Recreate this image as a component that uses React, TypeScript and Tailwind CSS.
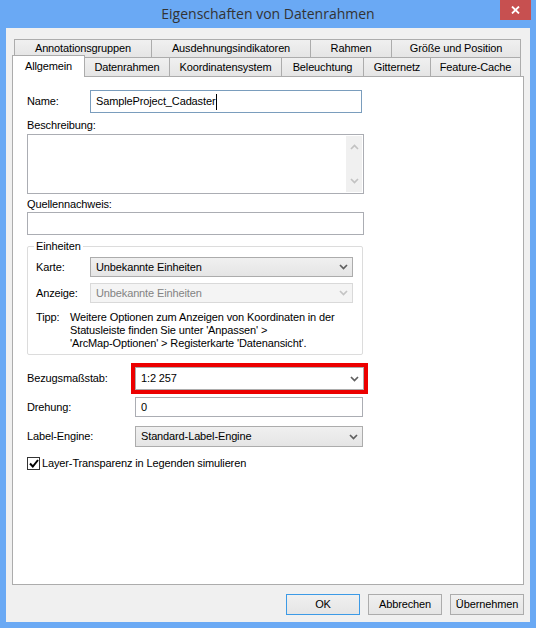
import React from "react";

const font = "font-['Liberation_Sans',Arial,sans-serif]";

function Chevron({ disabled = false }: { disabled?: boolean }) {
  return (
    <svg width="9" height="6" viewBox="0 0 9 6" className="shrink-0">
      <polyline
        points="1,1 4.5,4.5 8,1"
        fill="none"
        stroke={disabled ? "#c4c4c4" : "#5f5f5f"}
        strokeWidth="1.7"
      />
    </svg>
  );
}

function Tab({
  label,
  w,
  first = false,
}: {
  label: string;
  w: string;
  first?: boolean;
}) {
  return (
    <div
      className={`${w} ${first ? "" : "-ml-px"} h-full flex items-center justify-center border-t border-l border-r border-[#acacac] bg-gradient-to-b from-[#f0f0f0] to-[#e5e5e5] whitespace-nowrap`}
    >
      {label}
    </div>
  );
}

function Select({
  value,
  w,
  h = "h-[21px]",
  disabled = false,
}: {
  value: string;
  w: string;
  h?: string;
  disabled?: boolean;
}) {
  return (
    <div
      className={`${w} ${h} flex items-center justify-between pl-[5px] pr-[4px] border ${
        disabled
          ? "border-[#d9d9d9] bg-[#f4f4f4] text-[#838383]"
          : "border-[#acacac] bg-gradient-to-b from-[#f0f0f0] to-[#e5e5e5]"
      }`}
    >
      <span>{value}</span>
      <Chevron disabled={disabled} />
    </div>
  );
}

export default function App() {
  return (
    <div
      className={`w-[536px] h-[628px] bg-[#6aa9f4] flex flex-col ${font} text-[11px] leading-[13px] tracking-[-0.13px] text-black`}
    >
      {/* title bar */}
      <div className="h-[28px] grid grid-cols-[1fr_auto_1fr]">
        <div />
        <div className="pt-[4px] font-['Open_Sans',sans-serif] text-[14px] leading-[20px] tracking-normal text-[#333]">
          Eigenschaften von Datenrahmen
        </div>
        <div className="flex justify-end pr-[5px]">
          <div className="w-[31px] h-[20px] bg-[#c75050] flex items-center justify-center">
            <svg width="9" height="8" viewBox="0 0 9 8">
              <path d="M1 0.5 L8 7.5 M8 0.5 L1 7.5" stroke="#fff" strokeWidth="1.8" />
            </svg>
          </div>
        </div>
      </div>

      {/* client area */}
      <div className="mx-[6px] h-[594px] bg-[#f0f0f0] flex flex-col px-[6px] pt-[11px]">
        {/* tab rows */}
        <div className="h-[18px] flex pl-[2px]">
          <Tab first label="Annotationsgruppen" w="w-[138px]" />
          <Tab label="Ausdehnungsindikatoren" w="w-[160px]" />
          <Tab label="Rahmen" w="w-[82px]" />
          <Tab label="Größe und Position" w="w-[130px]" />
        </div>
        <div className="h-[19px] flex items-start">
          <div className="relative z-10 w-[73px] h-[22px] -mt-[2px] flex items-start justify-center pt-[4px] border-t border-l border-r border-[#acacac] bg-white">
            Allgemein
          </div>
          <div className="h-[19px] flex">
            <Tab label="Datenrahmen" w="w-[86px]" />
            <Tab label="Koordinatensystem" w="w-[113px]" />
            <Tab label="Beleuchtung" w="w-[83px]" />
            <Tab label="Gitternetz" w="w-[68px]" />
            <Tab label="Feature-Cache" w="w-[91px]" />
          </div>
        </div>

        {/* tab page */}
        <div className="h-[509px] border border-[#acacac] bg-white flex flex-col pl-[14px]">
          {/* Name */}
          <div className="mt-[13px] flex items-center">
            <span className="w-[63px]">Name:</span>
            <div className="w-[272px] h-[23px] border border-[#7a9dbd] flex items-center pl-[5px]">
              <span>SampleProject_Cadaster</span>
              <span className="w-px h-[16px] bg-black ml-[1px]" />
            </div>
          </div>

          <div className="mt-[6px]">Beschreibung:</div>
          <div className="mt-[2px] w-[337px] h-[60px] border border-[#abadb3] flex justify-end p-[1px]">
            <div className="w-[16px] h-full bg-[#f0f0f0] flex flex-col items-center justify-between py-[8px]">
              <svg width="9" height="6" viewBox="0 0 9 6">
                <polyline points="1,5 4.5,1.5 8,5" fill="none" stroke="#c2c2c2" strokeWidth="1.7" />
              </svg>
              <svg width="9" height="6" viewBox="0 0 9 6">
                <polyline points="1,1 4.5,4.5 8,1" fill="none" stroke="#c2c2c2" strokeWidth="1.7" />
              </svg>
            </div>
          </div>

          <div className="mt-[4px]">Quellennachweis:</div>
          <div className="mt-[1px] w-[337px] h-[23px] border border-[#abadb3]" />

          {/* Einheiten group */}
          <div className="mt-[11px] w-[336px] h-[109px] border border-[#dcdcdc] rounded-[2px] flex flex-col pl-[8px] pr-[9px]">
            <div className="-mt-[7px] -ml-[2px] self-start bg-white px-[2px]">Einheiten</div>
            <div className="mt-[4px] flex items-center">
              <span className="w-[54px]">Karte:</span>
              <Select value="Unbekannte Einheiten" w="w-[263px]" h="h-[20px]" />
            </div>
            <div className="mt-[6px] flex items-center">
              <span className="w-[54px]">Anzeige:</span>
              <Select value="Unbekannte Einheiten" w="w-[263px]" h="h-[20px]" disabled />
            </div>
            <div className="mt-[8px] flex">
              <span className="w-[34px]">Tipp:</span>
              <div className="flex flex-col">
                <span>Weitere Optionen zum Anzeigen von Koordinaten in der</span>
                <span>Statusleiste finden Sie unter 'Anpassen' &gt;</span>
                <span>'ArcMap-Optionen' &gt; Registerkarte 'Datenansicht'.</span>
              </div>
            </div>
          </div>

          {/* Bezugsmaßstab */}
          <div className="mt-[8px] flex items-center">
            <span className="w-[104px]">Bezugsmaßstab:</span>
            <div className="w-[237px] h-[31px] border-4 border-[#ec0000]">
              <div className="h-full border border-[#acacac] bg-white flex items-center justify-between pl-[5px] pr-[4px]">
                <span>1:2 257</span>
                <Chevron />
              </div>
            </div>
          </div>

          <div className="mt-[3px] flex items-center">
            <span className="w-[108px]">Drehung:</span>
            <div className="w-[228px] h-[20px] border border-[#abadb3] flex items-center pl-[5px]">0</div>
          </div>

          <div className="mt-[9px] flex items-center">
            <span className="w-[108px]">Label-Engine:</span>
            <Select value="Standard-Label-Engine" w="w-[228px]" />
          </div>

          <div className="mt-[10px] flex items-center">
            <div className="w-[13px] h-[13px] border border-[#333] bg-white flex items-center justify-center">
              <svg width="10" height="9" viewBox="0 0 10 9">
                <polyline points="1,4.5 3.8,7.5 9,1" fill="none" stroke="#000" strokeWidth="2" />
              </svg>
            </div>
            <span className="ml-[2px]">Layer-Transparenz in Legenden simulieren</span>
          </div>
        </div>

        {/* dialog buttons */}
        <div className="mt-[9px] flex justify-end gap-[8px]">
          <button className="w-[74px] h-[21px] border border-[#3c9ae6] bg-gradient-to-b from-[#f0f0f0] to-[#e5e5e5]">
            OK
          </button>
          <button className="w-[74px] h-[21px] border border-[#acacac] bg-gradient-to-b from-[#f0f0f0] to-[#e5e5e5]">
            Abbrechen
          </button>
          <button className="w-[74px] h-[21px] border border-[#acacac] bg-gradient-to-b from-[#f0f0f0] to-[#e5e5e5]">
            Übernehmen
          </button>
        </div>
      </div>
    </div>
  );
}
